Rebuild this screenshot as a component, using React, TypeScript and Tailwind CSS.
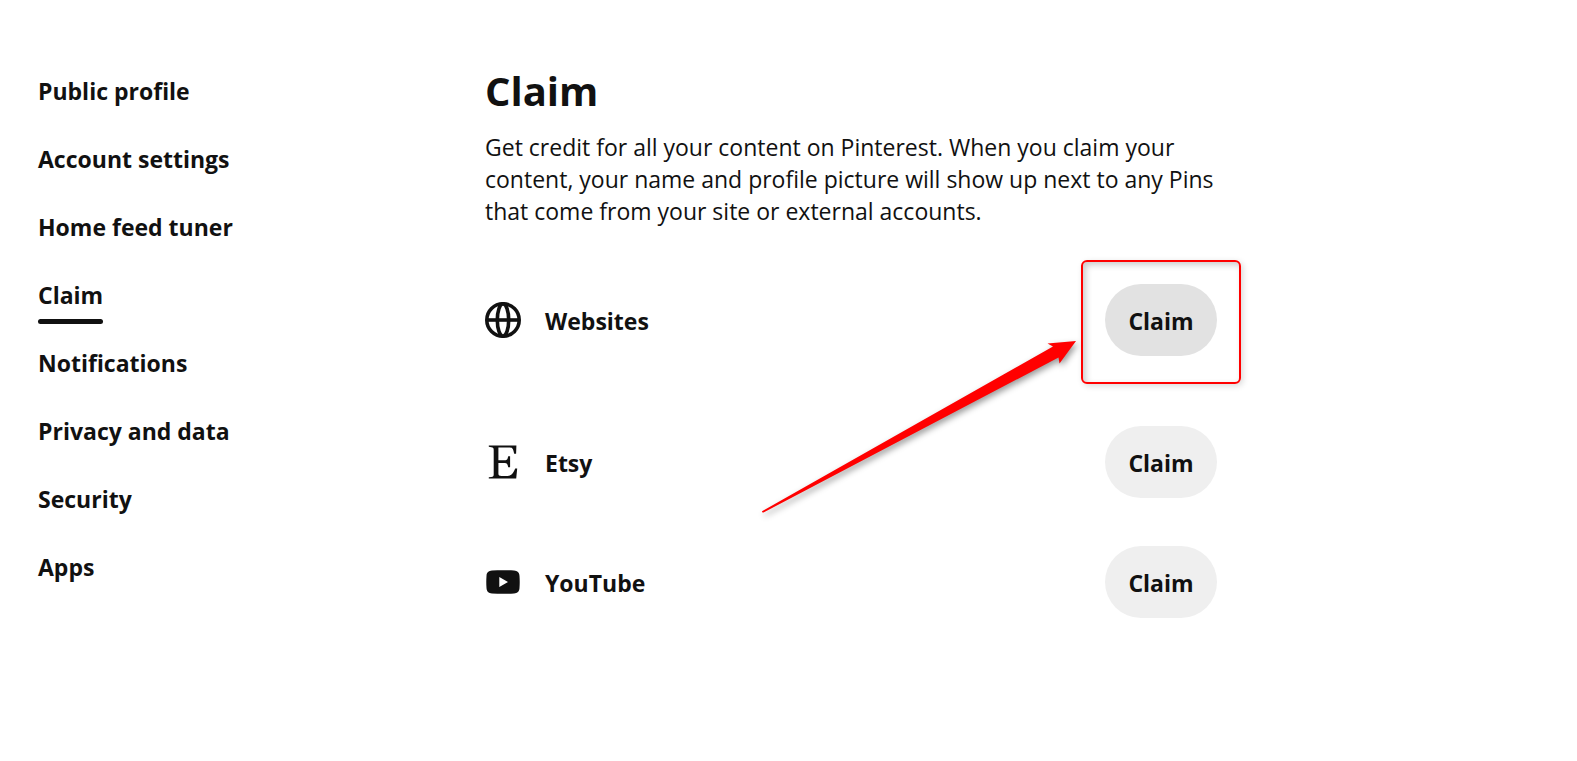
import type { ReactNode } from 'react';

interface NavItem {
  label: string;
  active?: boolean;
}

const NAV_ITEMS: NavItem[] = [
  { label: 'Public profile' },
  { label: 'Account settings' },
  { label: 'Home feed tuner' },
  { label: 'Claim', active: true },
  { label: 'Notifications' },
  { label: 'Privacy and data' },
  { label: 'Security' },
  { label: 'Apps' },
];

function GlobeIcon() {
  return (
    <svg className="w-9 h-9" viewBox="0 0 36 36" fill="none" stroke="currentColor" strokeWidth={3.6} aria-hidden="true">
      <circle cx="18" cy="18" r="16.2" />
      <ellipse cx="18" cy="18" rx="5.7" ry="16.2" />
      <path d="M2 18h32" />
    </svg>
  );
}

function EtsyIcon() {
  return (
    <svg className="w-9 h-9" viewBox="0 0 36 36" fill="currentColor" aria-hidden="true">
      <path d="M13.4 3.6v12.6h6.4c2.3 0 2.7-.8 3.4-4h1.9v11h-1.9c-.6-3.2-1.1-4.3-3.4-4.3h-6.4v10.5c0 1.8.9 2.5 3 2.5h6.2c3.6 0 5.4-2.2 7.6-7.4h2L31.2 34.5H3.8v-1.2l2.5-.4c1.9-.3 2.4-.8 2.4-2.7V5.9c0-1.9-.5-2.4-2.4-2.7l-2.5-.4V1.5h27.6l-.3 8.3h-1.9l-.7-2.8c-.7-2.7-1.5-3.4-4.5-3.4z" />
    </svg>
  );
}

function YouTubeIcon() {
  return (
    <svg className="w-9 h-9" viewBox="0 0 36 36" fill="currentColor" aria-hidden="true">
      <path
        fillRule="evenodd"
        d="M7 6.6C14 6.1 22 6.1 29 6.6C32.5 7 34.3 8.3 34.5 12C34.8 16 34.8 20 34.5 24C34.3 27.7 32.5 29 29 29.4C22 29.900 14 29.900 7 29.400C3.500 29 1.700 27.700 1.500 24C1.200 20 1.200 16 1.500 12C1.700 8.300 3.500 7 7 6.600ZM14.300 13v10l8.700-5z"
      />
    </svg>
  );
}

// Red pointer leading to the highlighted button
function Arrow() {
  return (
    <svg
      className="absolute right-[132px] top-[51px] w-[330px] h-[190px] overflow-visible pointer-events-none drop-shadow-[2px_3px_3px_rgba(0,0,0,0.4)]"
      viewBox="0 0 330 190"
      fill="#ff0000"
      aria-hidden="true"
    >
      <path d="M321 6L292.500 8.500L298 11.500L7 176.200Q7 178 8.500 177.500L303.500 22.500L304.500 28.500Z" />
    </svg>
  );
}

interface ClaimRowProps {
  icon: ReactNode;
  label: string;
  highlighted?: boolean;
}

function ClaimRow({ icon, label, highlighted = false }: ClaimRowProps) {
  return (
    <li className="relative flex items-center justify-between">
      <div className="flex items-center gap-6">
        {icon}
        <span className="pt-0.5 font-bold">{label}</span>
      </div>
      <div className="relative">
        <button
          type="button"
          aria-label={`Claim ${label}`}
          className={`block h-[72px] w-28 rounded-full pt-0.5 font-bold ${
            highlighted ? 'bg-[#e2e2e2]' : 'bg-[#efefef]'
          }`}
        >
          Claim
        </button>
        {highlighted && (
          <div className="absolute -inset-x-6 -top-6 -bottom-7 rounded-md border-2 border-[#ff0000] pointer-events-none shadow-[2px_2px_6px_rgba(0,0,0,0.15),inset_3px_3px_6px_rgba(0,0,0,0.2)]" />
        )}
      </div>
      {highlighted && <Arrow />}
    </li>
  );
}

export default function App() {
  return (
    <div className="flex min-h-screen bg-white pl-[38px] pr-6 text-[23px] leading-8 text-[#111111] font-['Open_Sans','Noto_Sans',sans-serif]">
      <nav className="w-[447px] shrink-0 pt-[75px]">
        <ul className="flex flex-col items-start gap-9">
          {NAV_ITEMS.map((item) => (
            <li key={item.label}>
              <a
                href="#"
                aria-current={item.active ? 'page' : undefined}
                className="relative block font-bold"
              >
                {item.label}
                {item.active && (
                  <span className="absolute inset-x-0 top-10 h-[5px] rounded-full bg-[#111111]" />
                )}
              </a>
            </li>
          ))}
        </ul>
      </nav>

      <main className="w-full max-w-[732px] pt-[67px]">
        <h1 className="text-[40px] leading-[48px] font-bold">Claim</h1>
        <p className="mt-4">
          Get credit for all your content on Pinterest. When you claim your content, your name and
          profile picture will show up next to any Pins that come from your site or external
          accounts.
        </p>

        <ul className="mt-[57px]">
          <ClaimRow icon={<GlobeIcon />} label="Websites" highlighted />
        </ul>
        <ul className="mt-[70px] flex flex-col gap-12">
          <ClaimRow icon={<EtsyIcon />} label="Etsy" />
          <ClaimRow icon={<YouTubeIcon />} label="YouTube" />
        </ul>
      </main>
    </div>
  );
}
